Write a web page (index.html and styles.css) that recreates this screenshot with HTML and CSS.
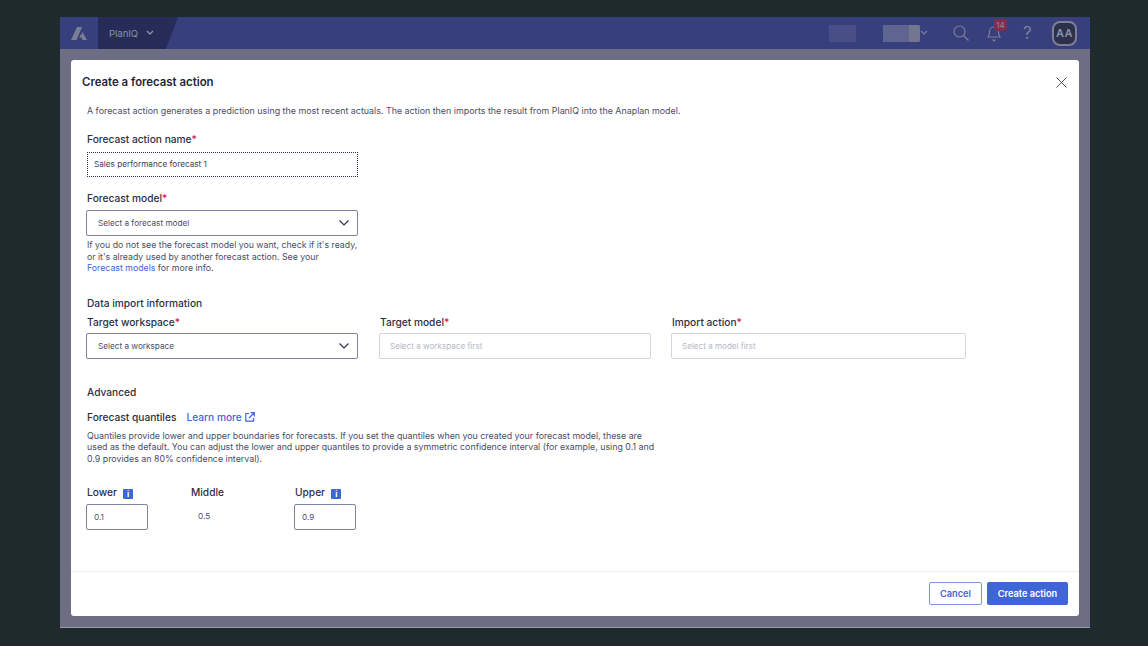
FILE: index.html
```html
<!DOCTYPE html>
<html lang="en">
<head>
    <meta charset="UTF-8">
    <title>Create a forecast action</title>
    <link rel="stylesheet" href="styles.css">
</head>
<body>
    <div class="app">
        <header class="nav">
            <svg class="logo" width="18" height="16" viewBox="0 0 18 16"><path d="M7 2h5L6.500 15H1z" fill="#7d7d92"/><path d="M12.500 7l4.500 8h-4.500l-1-2.500H9.500l1-3h1z" fill="#7d7d92"/></svg>
            <div class="product"><span>PlanIQ</span><svg width="8" height="6" viewBox="0 0 8 6"><path d="M1 1l3 3 3-3" fill="none" stroke="#8e90a8" stroke-width="1.300"/></svg></div>
            <div class="nav-right">
                <div class="blur-a"></div>
                <div class="blur-b"><div class="blur-c"></div></div>
                <svg class="nav-caret" width="8" height="6" viewBox="0 0 8 6"><path d="M1 1l3 3 3-3" fill="none" stroke="#7d7f98" stroke-width="1.2"/></svg>
                <svg class="nav-search" width="16" height="16" viewBox="0 0 16 16"><circle cx="6.5" cy="6.5" r="5.5" fill="none" stroke="#7d7f98" stroke-width="1.2"/><path d="M10.5 10.5l5 5" stroke="#7d7f98" stroke-width="1.2"/></svg>
                <div class="bell">
                    <svg width="14" height="17" viewBox="0 0 14 17"><path d="M1 12c1.500-1.500 1.500-3 1.500-5.500S4.500 2 7 2s4.500 2 4.500 4.500S11.500 10.500 13 12z" fill="none" stroke="#7d7f98" stroke-width="1.2"/><path d="M5.500 14.500L7 16l1.500-1.500" fill="none" stroke="#7d7f98" stroke-width="1.200"/></svg>
                    <span class="badge">14</span>
                </div>
                <span class="help">?</span>
                <div class="avatar">AA</div>
            </div>
        </header>
        <div class="overlay">
            <main class="modal">
                <div class="modal-head">
                    <h1>Create a forecast action</h1>
                    <svg width="11" height="11" viewBox="0 0 11 11"><path d="M.5.5l10 10M10.500.5l-10 10" stroke="#4e5268" stroke-width="1"/></svg>
                </div>
                <div class="modal-body">
                    <p class="intro">A forecast action generates a prediction using the most recent actuals. The action then imports the result from PlanIQ into the Anaplan model.</p>

                    <label class="label">Forecast action name<em>*</em></label>
                    <div class="field field-focus">Sales performance forecast 1</div>

                    <label class="label label-model">Forecast model<em>*</em></label>
                    <div class="select">
                        <span>Select a forecast model</span>
                        <svg width="10" height="6" viewBox="0 0 10 6"><path d="M.5.500L5 5 9.500.500" fill="none" stroke="#2b2f45" stroke-width="1.100"/></svg>
                    </div>
                    <p class="hint">If you do not see the forecast model you want, check if it's ready, or it's already used by another forecast action. See your<br><a class="link">Forecast models</a> for more info.</p>

                    <h2 class="section-import">Data import information</h2>
                    <div class="import-row">
                        <div class="col-first">
                            <label class="label">Target workspace<em>*</em></label>
                            <div class="select">
                                <span>Select a workspace</span>
                                <svg width="10" height="6" viewBox="0 0 10 6"><path d="M.5.500L5 5 9.500.500" fill="none" stroke="#2b2f45" stroke-width="1.100"/></svg>
                            </div>
                        </div>
                        <div class="col-model">
                            <label class="label">Target model<em>*</em></label>
                            <div class="disabled">Select a workspace first</div>
                        </div>
                        <div class="col-import">
                            <label class="label">Import action<em>*</em></label>
                            <div class="disabled">Select a model first</div>
                        </div>
                    </div>

                    <h2 class="section-advanced">Advanced</h2>
                    <div class="quantile-head">
                        <h3>Forecast quantiles</h3>
                        <a class="learn">Learn more <svg width="10" height="10" viewBox="0 0 10 10"><path d="M4 1.500H.8v7.700h7.700V6M4 6l5-5M5.500.7h3.800v3.800" fill="none" stroke="#3f66d6" stroke-width="1.200"/></svg></a>
                    </div>
                    <p class="quantile-text">Quantiles provide lower and upper boundaries for forecasts. If you set the quantiles when you created your forecast model, these are used as the default. You can adjust the lower and upper quantiles to provide a symmetric confidence interval (for example, using 0.1 and 0.9 provides an 80% confidence interval).</p>
                    <div class="quantiles">
                        <div class="quantile">
                            <div class="label">Lower <i class="info">i</i></div>
                            <div class="small-field">0.1</div>
                        </div>
                        <div class="quantile">
                            <div class="label">Middle</div>
                            <div class="static">0.5</div>
                        </div>
                        <div class="quantile">
                            <div class="label">Upper <i class="info">i</i></div>
                            <div class="small-field">0.9</div>
                        </div>
                    </div>
                </div>
                <footer class="modal-foot">
                    <button class="btn-cancel">Cancel</button>
                    <button class="btn-create">Create action</button>
                </footer>
            </main>
        </div>
    </div>
</body>
</html>
```

FILE: styles.css
```css
* {
    box-sizing: border-box;
}
html, body {
    height: 100%;
}
body {
    margin: 0;
    padding: 17px 58px 18px 60px;
    background-color: #1f2a2c;
    font-family: Inter, "Liberation Sans", sans-serif;
    color: #2b2f45;
    overflow: hidden;
}
.app {
    height: 611px;
    display: flex;
    flex-direction: column;
    border-bottom: 1px solid #9a9aa8;
}
.nav {
    height: 32px;
    flex: none;
    background-color: #37407c;
    display: flex;
    align-items: center;
    position: relative;
}
.logo {
    margin-left: 10px;
    margin-right: 10px;
}
.product {
    width: 80px;
    height: 32px;
    background-color: #262c57;
    clip-path: polygon(0 0, 100% 0, 85% 100%, 0 100%);
    display: flex;
    align-items: center;
    gap: 8px;
    padding-left: 11px;
    font-size: 9.500px;
    color: #8e90a8;
}
.nav-right {
    margin-left: auto;
    display: flex;
    align-items: center;
    height: 32px;
    padding-right: 13px;
}
.blur-a {
    width: 27px;
    height: 17px;
    background-color: #484f87;
    margin-right: 27px;
}
.blur-b {
    width: 37px;
    height: 17px;
    background-color: #5f6491;
    border-radius: 0 2px 2px 0;
    display: flex;
    justify-content: flex-end;
}
.blur-c {
    width: 11px;
    background-color: #74768f;
    border-radius: 0 2px 2px 0;
}
.nav-caret {
    margin-left: 0;
    margin-right: 25px;
}
.nav-search {
    margin-right: 18px;
}
.bell {
    position: relative;
    height: 17px;
    margin-right: 22px;
}
.badge {
    position: absolute;
    top: -6px;
    left: 7px;
    width: 13px;
    height: 12px;
    background-color: #7c2f4f;
    border-radius: 3px;
    color: #a0879c;
    font-size: 8px;
    line-height: 12px;
    text-align: center;
}
.help {
    font-size: 17px;
    color: #7d7f98;
    margin-right: 19px;
    width: 10px;
}
.avatar {
    width: 25px;
    height: 25px;
    border: 2px solid #7d7f98;
    border-radius: 8px;
    background-color: #2c3048;
    color: #8e90a8;
    font-size: 11px;
    font-weight: 600;
    letter-spacing: .5px;
    text-align: center;
    line-height: 21px;
}
.overlay {
    flex: 1;
    background-color: #6d6d84;
    padding: 11px 11px 11px;
    display: flex;
    min-height: 0;
}
.modal {
    flex: 1;
    background-color: #fff;
    border-radius: 3px;
    display: flex;
    flex-direction: column;
}
.modal-head {
    display: flex;
    justify-content: space-between;
    align-items: center;
    padding: 15px 12px 0 11px;
}
h1 {
    margin: 0;
    font-size: 11.400px;
    line-height: 15px;
    font-weight: 600;
    color: #22263c;
}
.modal-body {
    flex: 1;
    padding: 0 16px;
}
.intro {
    margin: 15px 0 0;
    font-size: 8.900px;
    line-height: 12px;
    color: #4a4e64;
}
.label {
    display: block;
    font-size: 10.200px;
    line-height: 13px;
    font-weight: 500;
    color: #2b2f45;
}
.label em {
    color: #c9264f;
    font-style: normal;
}
.intro + .label {
    margin-top: 16px;
}
.field {
    width: 271px;
    height: 25px;
    margin-top: 6px;
    padding-left: 6px;
    font-size: 8.200px;
    line-height: 23px;
    color: #3d4158;
}
.field-focus {
    border: 1px dotted #2b2f45;
}
.label-model {
    margin-top: 15px;
}
.select {
    width: 272px;
    height: 26px;
    margin-top: 5px;
    margin-left: -1px;
    border: 1px solid #7c82a0;
    border-radius: 2px;
    padding: 0 8px 0 11px;
    display: flex;
    justify-content: space-between;
    align-items: center;
    font-size: 8.200px;
    color: #4a4e64;
}
.hint {
    width: 275px;
    margin: 4px 0 0;
    font-size: 8.750px;
    line-height: 11.500px;
    color: #4a4e64;
}
.link {
    color: #3f66d6;
}
h2 {
    margin: 0;
    font-size: 10.200px;
    line-height: 13px;
    font-weight: 500;
    color: #2b2f45;
}
.section-import {
    margin-top: 22px;
}
.import-row {
    display: flex;
    margin-top: 6px;
}
.import-row .select, .import-row .disabled {
    margin-top: 4px;
}
.col-first {
    width: 293px;
}
.col-model {
    width: 292px;
}
.col-import {
    width: 294px;
}
.disabled {
    height: 26px;
    margin-left: -1px;
    border: 1px solid #d3d5de;
    border-radius: 2px;
    padding-left: 10px;
    font-size: 8.100px;
    line-height: 24px;
    color: #b4b7c4;
}
.col-model .disabled {
    width: 272px;
}
.section-advanced {
    margin-top: 27px;
}
.quantile-head {
    display: flex;
    align-items: center;
    gap: 10px;
    margin-top: 12px;
}
h3 {
    margin: 0;
    font-size: 10.200px;
    line-height: 13px;
    font-weight: 500;
    color: #2b2f45;
}
.learn {
    display: flex;
    align-items: center;
    gap: 3px;
    font-size: 10.200px;
    line-height: 13px;
    font-weight: 500;
    color: #3f66d6;
}
.quantile-text {
    width: 575px;
    margin: 6px 0 0;
    font-size: 8.840px;
    line-height: 11.700px;
    color: #4a4e64;
}
.quantiles {
    display: flex;
    margin-top: 21px;
}
.quantile {
    width: 104px;
}
.info {
    display: inline-block;
    width: 10px;
    height: 10px;
    margin-left: 3.500px;
    background-color: #3f66d6;
    border-radius: 1px;
    color: #fff;
    font-size: 8px;
    font-weight: 700;
    font-style: normal;
    line-height: 10px;
    text-align: center;
    vertical-align: -1px;
}
.small-field {
    width: 62px;
    height: 26px;
    margin-top: 5px;
    margin-left: -1px;
    border: 1px solid #7c82a0;
    border-radius: 2px;
    padding-left: 7px;
    font-size: 8.200px;
    line-height: 24px;
    color: #4a4e64;
}
.static {
    height: 26px;
    margin-top: 5px;
    padding-left: 7px;
    font-size: 8.200px;
    line-height: 24px;
    color: #4a4e64;
}
.modal-foot {
    height: 45px;
    flex: none;
    border-top: 1px solid #eeeef3;
    display: flex;
    justify-content: flex-end;
    align-items: center;
    gap: 5px;
    padding: 0 11px 1px;
}
button {
    height: 23px;
    border-radius: 2px;
    font-family: inherit;
    font-size: 9.200px;
    font-weight: 600;
}
.btn-cancel {
    width: 53px;
    background-color: #fff;
    border: 1px solid #7d95e2;
    color: #3f66d6;
}
.btn-create {
    width: 81px;
    background-color: #3f66d6;
    border: none;
    color: #fff;
}
```
